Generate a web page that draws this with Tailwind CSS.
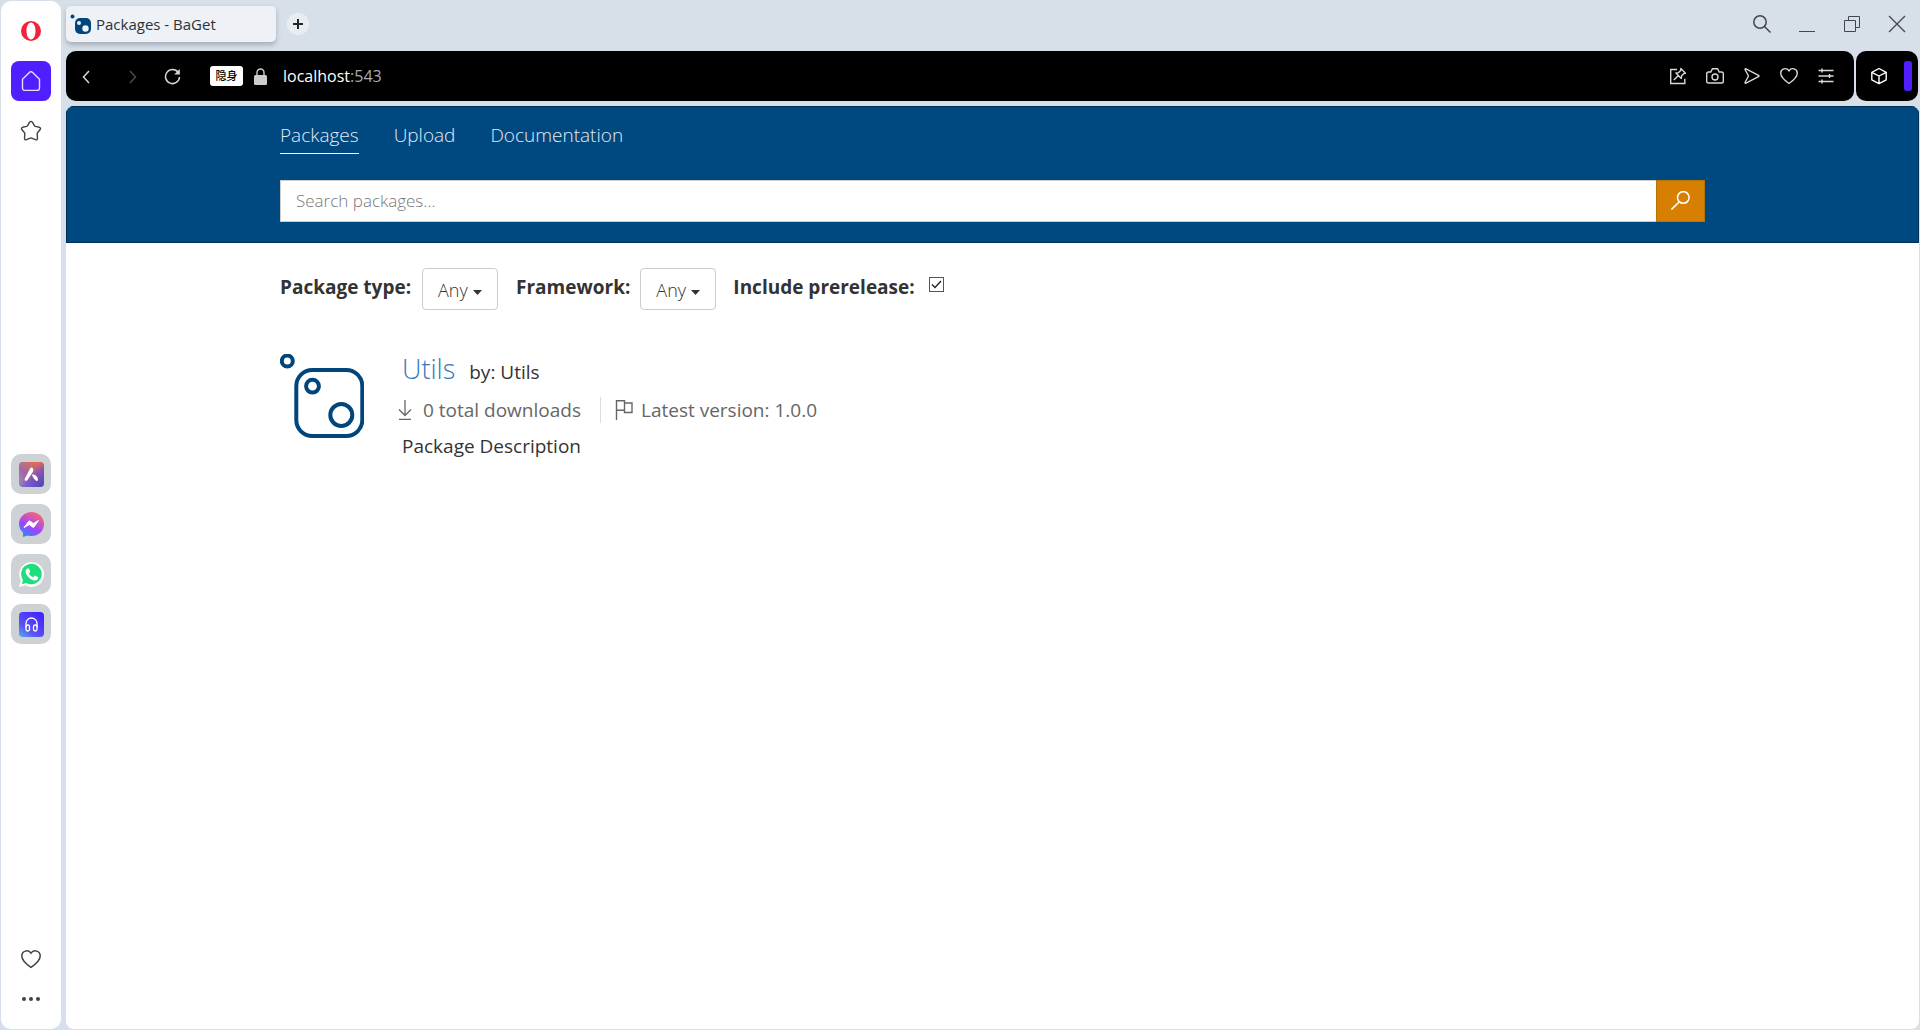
<!DOCTYPE html>
<html lang="en">
<head>
<meta charset="utf-8">
<meta name="viewport" content="width=device-width, initial-scale=1">
<title>Packages - BaGet</title>
<script src="https://cdn.jsdelivr.net/npm/@tailwindcss/browser@4"></script>
</head>
<body class="flex min-h-screen gap-[5px] bg-[#d7e0e8] p-px font-['Open_Sans','Noto_Sans_CJK_SC',sans-serif] text-[#333]">

<!-- Browser sidebar -->
<aside class="flex w-[60px] shrink-0 flex-col items-center justify-between rounded-[10px] bg-white text-[#3c434b]">
  <div class="flex flex-col items-center gap-[10px] pt-[10px]">
    <button class="flex size-10 items-center justify-center" aria-label="Opera menu">
      <svg class="size-5" viewBox="0 0 20 20"><path fill="#f5203a" fill-rule="evenodd" d="M10 0a10 10 0 1 0 0 20 10 10 0 0 0 0-20zm0 1.500c2.600 0 4.500 3.600 4.500 8.500s-1.900 8.500-4.500 8.500S5.500 14.900 5.500 10 7.400 1.500 10 1.500z"/></svg>
    </button>
    <button class="flex size-10 items-center justify-center rounded-lg bg-[#4f1fff] text-[#e6e0ff]" aria-label="Home">
      <svg class="size-5" viewBox="0 0 20 20" fill="none" stroke="currentColor" stroke-width="1.400"><path d="M1.500 8.200 8.600 1.200q1.400-1 2.800 0l7.100 7v8.800q0 2.500-2.500 2.500H4q-2.500 0-2.500-2.500z"/></svg>
    </button>
    <button class="flex size-10 items-center justify-center" aria-label="Favourites">
      <svg class="size-[22px]" viewBox="0 0 22 22" fill="none" stroke="currentColor" stroke-width="1.400" stroke-linejoin="round"><path d="M9.600 2.200q1.400-1.600 2.800 0l2 3.500q.3.500 1 .7l4 .9q1.700.6.800 2.200l-2.700 3.200q-.3.400-.3 1l.3 4.700q-.2 1.900-2 1.300L11.600 18.100q-.6-.2-1.200 0L6.500 19.700q-1.800.6-2-1.300l.3-4.700q0-.6-.3-1L1.800 9.500q-.9-1.600.8-2.200l4-.9q.7-.2 1-.7z"/></svg>
    </button>
  </div>

  <div class="mt-2 flex flex-col gap-[10px]">
    <button class="flex size-10 items-center justify-center rounded-[10px] bg-[#cfd2d5]" aria-label="Aria">
      <svg class="size-[25px]" viewBox="0 0 25 25"><defs><linearGradient id="aria" x1="0" y1="1" x2=".8" y2="0"><stop stop-color="#7fb0ea"/><stop offset=".45" stop-color="#8a62c4"/><stop offset="1" stop-color="#f0703f"/></linearGradient><linearGradient id="ariaShade" x1="0" y1="0" x2="1" y2="1"><stop stop-color="#b98a8a" stop-opacity=".4"/><stop offset=".3" stop-color="#f0703f" stop-opacity=".2"/><stop offset=".6" stop-color="#7449c8" stop-opacity=".7"/><stop offset="1" stop-color="#4a45b8"/></linearGradient></defs><rect width="25" height="25" rx="4" fill="url(#aria)"/><rect width="25" height="25" rx="4" fill="url(#ariaShade)"/><path d="M12.500 5.500q1.500.2 1.800 2l-.2 2L8.500 18q-2 1.600-2.700.2-.4-.8.200-1.900l5-9.500q.6-1.200 1.500-1.300zM12.800 12.500q3.500-.5 5.200 2.300l1 2.200q.4 2-1.600 1.900-2.500-1-4.600-6.400z" fill="#fff"/></svg>
    </button>
    <button class="flex size-10 items-center justify-center rounded-[10px] bg-[#cfd2d5]" aria-label="Messenger">
      <svg class="size-[25px]" viewBox="0 0 25 25"><defs><linearGradient id="msg" x1=".2" y1="1" x2=".75" y2="0"><stop stop-color="#2a8cff"/><stop offset=".4" stop-color="#9a45ff"/><stop offset="1" stop-color="#ff6670"/></linearGradient></defs><path d="M12.500 0C5.500 0 0 5 0 12q0 5 4 8.500V25l4.500-1.500q2 .6 4 .6C19.500 24.100 25 19 25 12S19.500 0 12.500 0z" fill="url(#msg)"/><path d="m5 15.500 4.500-6q.8-.9 1.800-.2l3 2.300 5.200-3.100-4.300 6.200q-.8 1-1.800.2l-3-2.300z" fill="#fff" stroke="#fff"/></svg>
    </button>
    <button class="flex size-10 items-center justify-center rounded-[10px] bg-[#cfd2d5]" aria-label="WhatsApp">
      <svg class="size-[25px]" viewBox="0 0 25 25"><path d="M0 25l1.800-6.500A12.400 12.400 0 1 1 6.500 23.300z" fill="#fff"/><path d="M2.800 22.200 4 18A10.300 10.300 0 1 1 7.300 21z" fill="#1fdf7c"/><path d="M8.500 6.500q1-.4 1.400.3l1.100 2.500q.2.600-.2 1.100l-.9 1.100q1.500 2.800 4.200 3.800l1.200-1.400q.5-.5 1-.2l2.400 1.200q.7.400.5 1-.6 2.500-3.200 2.600-3.800-.1-7-3.700-3-3.600-2.300-6.200.5-1.500 1.800-2.100z" fill="#fff"/></svg>
    </button>
    <button class="flex size-10 items-center justify-center rounded-[10px] bg-[#cfd2d5]" aria-label="Player">
      <svg class="size-[25px]" viewBox="0 0 25 25"><defs><linearGradient id="ply" x1="0" y1="1" x2=".8" y2="0"><stop stop-color="#4fb0f5"/><stop offset=".35" stop-color="#5a55f0"/><stop offset="1" stop-color="#4322ff"/></linearGradient></defs><rect width="25" height="25" rx="4" fill="url(#ply)"/><g fill="none" stroke="#fff" stroke-width="1.300"><path d="M7 15.500v-4a5.500 5.500 0 0 1 11 0v4"/><rect x="7" y="13" width="3.500" height="6" rx="1.700"/><rect x="14.500" y="13" width="3.500" height="6" rx="1.700"/></g></svg>
    </button>
  </div>

  <div class="flex flex-col items-center pb-[10px]">
    <button class="flex size-10 items-center justify-center" aria-label="Pinboards">
      <svg class="size-5" viewBox="0 0 20 20" fill="none" stroke="currentColor" stroke-width="1.500"><path d="M10 18.300C3.500 13.800.8 10.500.8 6.900a5 5 0 0 1 9.200-2.700 5 5 0 0 1 9.200 2.700c0 3.600-2.700 6.900-9.200 11.400z"/></svg>
    </button>
    <button class="flex size-10 items-center justify-center" aria-label="More">
      <svg class="size-5" viewBox="0 0 20 20" fill="currentColor"><circle cx="3" cy="10" r="2"/><circle cx="10" cy="10" r="2"/><circle cx="17" cy="10" r="2"/></svg>
    </button>
  </div>
</aside>

<div class="flex min-w-0 grow flex-col">
  <!-- Tab strip -->
  <div class="flex h-[50px] items-start justify-between pt-[5px]">
    <div class="flex items-center gap-[11px]">
      <div class="flex h-9 w-[210px] items-center gap-[5px] rounded-[5px] bg-[#eef1f6] pl-1 shadow-[0_3px_5px_rgba(90,100,120,0.4)]">
        <svg class="size-[21px]" viewBox="0 0 21 21"><circle cx="2.500" cy="2.500" r="2" fill="#00457c"/><rect x="5" y="4" width="16" height="16" rx="5" fill="#00457c"/><circle cx="9" cy="9" r="2" fill="#eef1f6"/><circle cx="15.500" cy="14.500" r="3.200" fill="#eef1f6"/></svg>
        <span class="text-[15px] text-[#2b3138]">Packages - BaGet</span>
      </div>
      <button class="flex size-[22px] items-center justify-center rounded-full bg-[#e8edf2]" aria-label="New tab">
        <svg class="size-[10px]" viewBox="0 0 10 10" stroke="#20262c" stroke-width="2"><path d="M5 0v10M0 5h10"/></svg>
      </button>
    </div>
    <div class="flex h-9 items-center gap-[27px] pr-[13px] text-[#41474d]">
      <button aria-label="Search tabs"><svg class="block size-[18px]" viewBox="0 0 18 18" fill="none" stroke="currentColor" stroke-width="1.500"><circle cx="7" cy="7" r="6.200"/><path d="m11.500 11.500 6 6"/></svg></button>
      <button aria-label="Minimize"><svg class="block size-[18px]" viewBox="0 0 18 18" fill="none" stroke="currentColor"><path d="M1 16.500h16"/></svg></button>
      <button aria-label="Restore"><svg class="block size-[18px]" viewBox="0 0 18 18" fill="none" stroke="currentColor"><path d="M1.500 5.500h11v11h-11zM5.500 5.500v-4h11v11h-4"/></svg></button>
      <button aria-label="Close"><svg class="block size-[18px]" viewBox="0 0 18 18" fill="none" stroke="currentColor" stroke-width="1.300"><path d="m1 1 16 16M17 1 1 17"/></svg></button>
    </div>
  </div>

  <!-- Address bar -->
  <div class="flex h-[50px] gap-[2px] pr-px">
    <div class="flex min-w-0 grow items-center justify-between rounded-[10px] bg-black pr-[19px] pl-3 text-[#d8d8d8]">
      <div class="flex items-center">
        <button class="mr-[29px]" aria-label="Back"><svg class="block size-[17px]" viewBox="0 0 17 17" fill="none" stroke="currentColor" stroke-width="1.500"><path d="M11 3 5.500 9l5.500 6"/></svg></button>
        <button class="mr-[23px] text-[#4a4a4a]" aria-label="Forward"><svg class="block size-[17px]" viewBox="0 0 17 17" fill="none" stroke="currentColor" stroke-width="1.500"><path d="m6 3 5.500 6L6 15"/></svg></button>
        <button class="mr-[29px]" aria-label="Reload"><svg class="block size-[17px]" viewBox="0 0 17 17" fill="none" stroke="currentColor" stroke-width="1.500"><path d="M14.200 4.500A7 7 0 1 0 15.500 9"/><path d="M15.800 1v5.500h-5.600z" fill="currentColor" stroke="none"/></svg></button>
        <span class="mr-[11px] flex h-5 w-[33px] items-center justify-center rounded-[3px] bg-white text-[11px] font-medium text-black">隐身</span>
        <svg class="mr-4 h-[17px] w-[13px]" viewBox="0 0 13 17"><path d="M3 8V4.500a3.500 3.500 0 0 1 7 0V8" fill="none" stroke="#cdcdcd" stroke-width="1.400"/><rect y="7" width="13" height="10" rx="1.500" fill="#cdcdcd"/></svg>
        <div class="text-[16px] text-white">localhost<span class="text-[#a5abb5]">:543</span></div>
      </div>
      <div class="flex items-center gap-[19px]">
        <button aria-label="Easy files"><svg class="block size-[18px]" viewBox="0 0 18 18" fill="none" stroke="currentColor" stroke-width="1.400"><path d="M8 2.500H1.700v14h14.100v-4.800"/><path d="m11.800 1.500 4.700 4.700-1.700.4-2.100 2.100-.4 2.700-5.400-5.400 2.700-.4 2.100-2.100zM9.200 8.700l-4.400 4.400" stroke-linejoin="round"/></svg></button>
        <button aria-label="Snapshot"><svg class="block size-[18px]" viewBox="0 0 18 18" fill="none" stroke="currentColor" stroke-width="1.400"><path d="M2.500 5h2.300l1.600-3.200h5.200L13.200 5h2.300q1.800 0 1.800 1.800v7.400q0 1.800-1.800 1.800h-13q-1.800 0-1.800-1.800V6.800Q.7 5 2.500 5z"/><circle cx="9" cy="10" r="3"/></svg></button>
        <button aria-label="My Flow"><svg class="block size-[18px]" viewBox="0 0 18 18" fill="none" stroke="currentColor" stroke-width="1.400" stroke-linejoin="round"><path d="M2 2.500q0-1 1-.6l12.500 6.400q1 .7 0 1.400L3 16.100q-1 .4-1-.6L5.500 9z"/></svg></button>
        <button aria-label="Bookmark"><svg class="block size-[18px]" viewBox="0 0 18 18" fill="none" stroke="currentColor" stroke-width="1.400"><path d="M9 16.500C3 12.300.7 9.500.7 6.300A4.500 4.500 0 0 1 9 3.800a4.500 4.500 0 0 1 8.300 2.500c0 3.200-2.300 6-8.300 10.200z"/></svg></button>
        <button aria-label="Easy setup"><svg class="block size-[18px]" viewBox="0 0 18 18" fill="none" stroke="currentColor" stroke-width="1.500"><path d="M1.500 3.500h15M1.500 9h15M1.500 14.500h15M5 1.500v4M12.500 7v4M5 12.500v4"/></svg></button>
      </div>
    </div>
    <div class="flex w-[62px] items-center justify-end gap-4 rounded-[10px] bg-black pr-[6px] text-white">
      <button aria-label="Extensions"><svg class="block size-[18px]" viewBox="0 0 18 18" fill="none" stroke="currentColor" stroke-width="1.400" stroke-linejoin="round"><path d="m9 1.500 7.200 3.800v7.600L9 16.700l-7.200-3.800V5.300zM1.800 5.300 9 9l7.200-3.700M9 9v7.500"/></svg></button>
      <span class="h-[30px] w-2 rounded-[3px] bg-[#4f1fff]"></span>
    </div>
  </div>

  <!-- Page -->
  <div class="mt-[5px] flex grow flex-col overflow-hidden rounded-[8px] bg-white">
    <header class="border border-[#002f55] bg-[#004880]">
      <div class="mx-auto max-w-[1425px] pt-3 pb-5">
        <nav class="flex items-start gap-[35px] text-[19px] leading-8 font-light text-[#e3ebf2]">
          <a href="#" class="border-b border-white pb-[2px]">Packages</a>
          <a href="#">Upload</a>
          <a href="#">Documentation</a>
        </nav>
        <form class="mt-[26px] flex h-[42px]">
          <input type="search" aria-label="Search packages" placeholder="Search packages..." class="min-w-0 grow border border-r-0 border-[#ccc] bg-white px-[15px] text-[17px] font-light text-[#333] placeholder:text-[#777]">
          <button type="button" class="flex w-[49px] items-center justify-center border border-[#b8720a] bg-[#d67f00] pb-[2px]" aria-label="Search">
            <svg class="size-[19px]" viewBox="0 0 19 19" fill="none" stroke="#fff" stroke-width="1.500"><circle cx="12.300" cy="6.500" r="5.800"/><path d="M8.300 10.700.5 18.400"/></svg>
          </button>
        </form>
      </div>
    </header>

    <main class="mx-auto w-full max-w-[1425px] pt-[25px]">
      <form class="flex items-start text-[19px] leading-[38px] font-bold">
        <label for="type" class="mr-[11px]">Package type:</label>
        <div class="relative mr-[18px]">
          <select id="type" class="block h-[42px] w-[76px] appearance-none rounded-[4px] border border-[#ccc] bg-white px-[15px] pt-[2px] text-[18px] font-light text-[#333]"><option>Any</option></select>
          <svg class="pointer-events-none absolute top-[22px] right-4 h-[5px] w-[9px]" viewBox="0 0 9 5"><path d="M0 0h9L4.500 5z" fill="#333"/></svg>
        </div>
        <label for="framework" class="mr-[10px]">Framework:</label>
        <div class="relative mr-[17px]">
          <select id="framework" class="block h-[42px] w-[76px] appearance-none rounded-[4px] border border-[#ccc] bg-white px-[15px] pt-[2px] text-[18px] font-light text-[#333]"><option>Any</option></select>
          <svg class="pointer-events-none absolute top-[22px] right-4 h-[5px] w-[9px]" viewBox="0 0 9 5"><path d="M0 0h9L4.500 5z" fill="#333"/></svg>
        </div>
        <label for="prerelease" class="mr-[14px]">Include prerelease:</label>
        <span class="relative mt-[9px] size-[15px]">
          <input id="prerelease" type="checkbox" checked class="block size-[15px] appearance-none border border-[#555] bg-white">
          <svg class="pointer-events-none absolute inset-0" viewBox="0 0 15 15" fill="none" stroke="#222" stroke-width="1.400"><path d="m3 7.500 3 3 6-6.500"/></svg>
        </span>
      </form>

      <article class="mt-[41px] flex items-start gap-[38px]">
        <svg class="mt-[3px] size-[84px] shrink-0" viewBox="0 0 84 84" fill="none" stroke="#00457c" stroke-width="4"><circle cx="7.300" cy="7" r="5.500"/><circle cx="32.500" cy="32.200" r="6.400"/><circle cx="61.300" cy="61" r="11"/><rect x="16.300" y="16" width="66" height="66" rx="16"/></svg>
        <div class="text-[19px]">
          <h2 class="flex items-baseline gap-[14px] leading-9"><a href="#" class="text-[27px] font-light text-[#337ab7]">Utils</a><span>by: Utils</span></h2>
          <ul class="mt-[3px] flex h-[34px] items-center text-[#666]">
            <li class="flex items-center gap-[11px] border-r border-[#ddd] pr-[19px] leading-[26px]">
              <svg class="-ml-1 h-[20px] w-[14px]" viewBox="0 0 14 20" fill="none" stroke="currentColor" stroke-width="1.300"><path d="M7 0v15M1 9.500l6 6 6-6M1 19.300h12"/></svg>0 total downloads
            </li>
            <li class="flex items-center gap-2 pl-[14px] leading-[26px]">
              <svg class="h-[20px] w-[18px]" viewBox="0 0 18 20" fill="none" stroke="currentColor" stroke-width="1.400"><path d="M1.500 20V.8h8v9.400h-8M9.500 3h7.500v9.500H9.500v-2.300"/></svg>Latest version: 1.0.0
            </li>
          </ul>
          <p class="mt-[2px] leading-[34px]">Package Description</p>
        </div>
      </article>
    </main>
  </div>
</div>
</body>
</html>
